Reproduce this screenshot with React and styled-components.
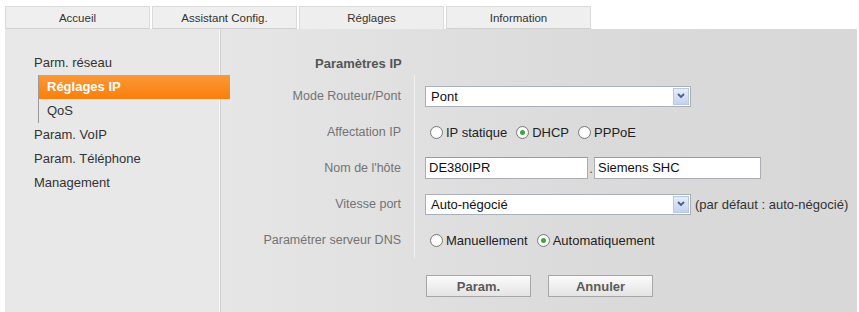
import React from 'react';
import styled, { createGlobalStyle } from 'styled-components';

const Global = createGlobalStyle`
  html, body {
    margin: 0;
    background: #fff;
    font-family: "Liberation Sans", Arial, sans-serif;
    font-size: 13px;
  }
`;

const Page = styled.div`
  padding: 6px 2px 0 5px;
  width: 852px;
`;

const TabBar = styled.div`
  display: flex;
  gap: 2px;
  height: 23px;
`;

const Tab = styled.div`
  width: 145px;
  height: 23px;
  box-sizing: border-box;
  border: 1px solid #dadada;
  border-bottom: ${(p) => (p.active ? 'none' : '1px solid #d0d0d0')};
  background: ${(p) => (p.active ? '#eeeeee' : '#efefef')};
  color: #333;
  font-size: 11.5px;
  display: flex;
  align-items: center;
  justify-content: center;
`;

const Panel = styled.div`
  display: flex;
  height: 283px;
  background: #e8e8e8;
`;

const Sidebar = styled.nav`
  position: relative;
  z-index: 1;
  width: 215px;
  flex: none;
  padding-top: 22px;
  box-sizing: border-box;
  border-right: 1px solid #f7f7f7;
  box-shadow: 1px 0 0 #d0d0d0;
`;

const NavItem = styled.div`
  height: 24px;
  line-height: 24px;
  padding-left: 29px;
  color: #333;
`;

const SubList = styled.div`
  margin-left: 33px;
  border-left: 1px solid #9a9a9a;
  width: 191px;
`;

const SubItem = styled.div`
  height: 24px;
  line-height: 24px;
  padding-left: 8px;
  color: ${(p) => (p.active ? '#fff' : '#333')};
  font-weight: ${(p) => (p.active ? 'bold' : 'normal')};
  background: ${(p) => (p.active ? 'linear-gradient(#fb9838, #f97f0b)' : 'transparent')};
`;

const Content = styled.section`
  flex: 1;
  margin-left: 1px;
  padding-top: 28px;
  background: linear-gradient(to right, #e6e6e6 0px, #dadada 380px, #d8d8d8 100%);
`;

const Title = styled.div`
  padding-left: 94px;
  height: 14px;
  line-height: 14px;
  font-weight: bold;
  color: #555;
  margin-bottom: 7px;
`;

const Row = styled.div`
  display: grid;
  grid-template-columns: 194px 1fr;
  height: 36px;
`;

const Label = styled.div`
  display: flex;
  align-items: center;
  justify-content: flex-end;
  padding-right: 13px;
  margin-top: -3px;
  padding-top: 3px;
  border-right: 1px solid #f1f1f1;
  color: #737373;
  font-size: 12.5px;
`;

const Cell = styled.div`
  display: flex;
  align-items: center;
  padding-left: 10px;
  color: #222;
`;

const SelectBox = styled.div`
  position: relative;
  width: 266px;
  height: 21px;
  box-sizing: border-box;
  border: 1px solid #a9b0ba;
  background: #fff;
  padding-left: 5px;
  line-height: 19px;
  color: #111;
`;

const Arrow = styled.span`
  position: absolute;
  right: 1px;
  top: 1px;
  width: 16px;
  height: 17px;
  box-sizing: border-box;
  border: 1px solid #b8c7e2;
  background: linear-gradient(#e6edf9, #c3d3ee);
  display: flex;
  align-items: center;
  justify-content: center;
`;

const TextInput = styled.div`
  width: ${(p) => p.w}px;
  height: 22px;
  box-sizing: border-box;
  border: 1px solid #abadb3;
  border-top-color: #9a9ca3;
  background: #fff;
  padding-left: 3px;
  line-height: 20px;
  color: #111;
`;

const Dot = styled.span`
  width: 6px;
  align-self: flex-end;
  margin-bottom: 11px;
  text-align: center;
  color: #555;
  line-height: 1;
`;

const Radio = styled.label`
  display: inline-flex;
  align-items: center;
  margin-right: 4px;
  color: #222;
`;

const Circle = styled.span`
  width: 11px;
  height: 11px;
  border: 1px solid #7a7a7a;
  border-radius: 50%;
  background: radial-gradient(circle, #fff 40%, #ececec);
  margin: 0 3px 0 5px;
  display: flex;
  align-items: center;
  justify-content: center;
  &::after {
    content: '';
    width: 5px;
    height: 5px;
    border-radius: 50%;
    background: ${(p) => (p.checked ? '#3ea53e' : 'transparent')};
  }
`;

const Hint = styled.span`
  margin-left: 4px;
  color: #333;
`;

const Buttons = styled.div`
  display: flex;
  gap: 17px;
  padding-left: 205px;
  margin-top: 17px;
`;

const Button = styled.button`
  width: 105px;
  height: 22px;
  border: 1px solid #a6a6a6;
  background: linear-gradient(#fbfbfb, #e4e4e4);
  font-family: "Liberation Sans", Arial, sans-serif;
  font-size: 13px;
  font-weight: bold;
  color: #5a5a5a;
  padding: 0;
`;

const Chevron = () => (
  <svg width="8" height="6" viewBox="0 0 8 6">
    <path d="M1 1 L4 4 L7 1" fill="none" stroke="#4a5f86" strokeWidth="1.8" />
  </svg>
);

const Select = ({ value }) => (
  <SelectBox>
    {value}
    <Arrow><Chevron /></Arrow>
  </SelectBox>
);

const RadioOpt = ({ checked, children }) => (
  <Radio>
    <Circle checked={checked} />
    {children}
  </Radio>
);

export default function App() {
  return (
    <Page>
      <Global />
      <TabBar>
        <Tab>Accueil</Tab>
        <Tab>Assistant Config.</Tab>
        <Tab active>Réglages</Tab>
        <Tab>Information</Tab>
      </TabBar>
      <Panel>
        <Sidebar>
          <NavItem>Parm. réseau</NavItem>
          <SubList>
            <SubItem active>Réglages IP</SubItem>
            <SubItem>QoS</SubItem>
          </SubList>
          <NavItem>Param. VoIP</NavItem>
          <NavItem>Param. Téléphone</NavItem>
          <NavItem>Management</NavItem>
        </Sidebar>
        <Content>
          <Title>Paramètres IP</Title>
          <Row>
            <Label>Mode Routeur/Pont</Label>
            <Cell><Select value="Pont" /></Cell>
          </Row>
          <Row>
            <Label>Affectation IP</Label>
            <Cell>
              <RadioOpt>IP statique</RadioOpt>
              <RadioOpt checked>DHCP</RadioOpt>
              <RadioOpt>PPPoE</RadioOpt>
            </Cell>
          </Row>
          <Row>
            <Label>Nom de l'hôte</Label>
            <Cell>
              <TextInput w={163}>DE380IPR</TextInput>
              <Dot>.</Dot>
              <TextInput w={167}>Siemens SHC</TextInput>
            </Cell>
          </Row>
          <Row>
            <Label>Vitesse port</Label>
            <Cell>
              <Select value="Auto-négocié" />
              <Hint>(par défaut : auto-négocié)</Hint>
            </Cell>
          </Row>
          <Row>
            <Label>Paramétrer serveur DNS</Label>
            <Cell>
              <RadioOpt>Manuellement</RadioOpt>
              <RadioOpt checked>Automatiquement</RadioOpt>
            </Cell>
          </Row>
          <Buttons>
            <Button>Param.</Button>
            <Button>Annuler</Button>
          </Buttons>
        </Content>
      </Panel>
    </Page>
  );
}
